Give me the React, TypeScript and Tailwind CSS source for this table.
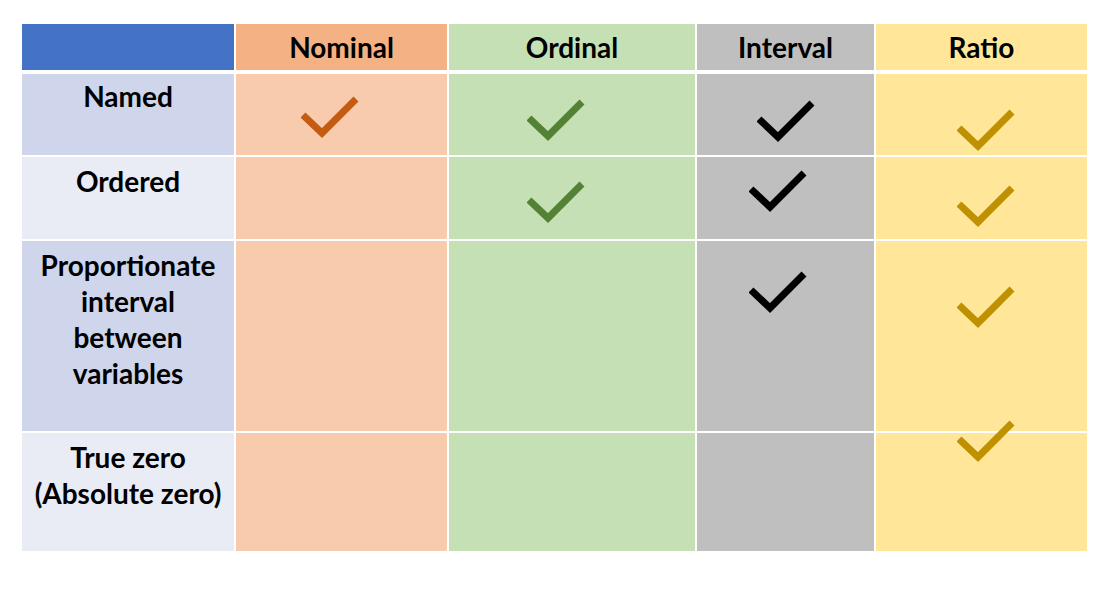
import React, { FC } from "react";

type Check = { x: number; y: number; color: string };

// positions relative to the table's top-left corner
const checks: Check[] = [
    { x: 279, y: 72, color: "#C55A11" },
    { x: 505, y: 75, color: "#538135" },
    { x: 735, y: 76, color: "#000000" },
    { x: 935, y: 85, color: "#BF9000" },
    { x: 505, y: 157, color: "#538135" },
    { x: 727, y: 146, color: "#000000" },
    { x: 935, y: 161, color: "#BF9000" },
    { x: 727, y: 247, color: "#000000" },
    { x: 935, y: 262, color: "#BF9000" },
    { x: 935, y: 396, color: "#BF9000" },
];

const CheckMark: FC<Check> = ({ x, y, color }) => (
    <svg
        className="absolute"
        style={{ left: x, top: y }}
        width="58"
        height="42"
        viewBox="0 0 58 42"
    >
        <polyline
            points="2,19 21,37 55,3"
            fill="none"
            stroke={color}
            strokeWidth="7"
            strokeLinejoin="miter"
            strokeLinecap="butt"
        />
    </svg>
);

const headers = [
    { label: "", bg: "bg-[#4472C4]" },
    { label: "Nominal", bg: "bg-[#F4B183]" },
    { label: "Ordinal", bg: "bg-[#C5E0B4]" },
    { label: "Interval", bg: "bg-[#BFBFBF]" },
    { label: "Ratio", bg: "bg-[#FFE699]" },
];

const rows = [
    { label: ["Named"], bg: "bg-[#CFD5EA]", pt: "pt-[4px]" },
    { label: ["Ordered"], bg: "bg-[#E9EBF5]", pt: "pt-[6px]" },
    {
        label: ["Proportionate", "interval", "between", "variables"],
        bg: "bg-[#CFD5EA]",
        pt: "pt-[6px]",
    },
    { label: ["True zero", "(Absolute zero)"], bg: "bg-[#E9EBF5]", pt: "pt-[6px]" },
];

const cols = "grid grid-cols-[212px_211px_246px_177px_211px] gap-x-[2px]";

const App = () => {
    return (
        <div className="w-[1120px] h-[592px] bg-white pt-[24px] pl-[22px] font-['Lato',sans-serif] font-bold text-black text-[28px] leading-[36px]">
            <div className="relative w-[1065px]">
                <div className={`${cols} h-[46px]`}>
                    {headers.map((h, i) => (
                        <div
                            key={i}
                            className={`${h.bg} flex items-center justify-center`}
                        >
                            {h.label}
                        </div>
                    ))}
                </div>
                <div
                    className={`${cols} mt-[4px] grid-rows-[81px_82px_190px_118px] gap-y-[2px]`}
                >
                    {rows.map((r, i) => (
                        <React.Fragment key={i}>
                            <div className={`${r.bg} ${r.pt} text-center`}>
                                {r.label.map((l, j) => (
                                    <div key={j}>{l}</div>
                                ))}
                            </div>
                            <div className="bg-[#F8CBAD]" />
                            <div className="bg-[#C5E0B4]" />
                            <div className="bg-[#BFBFBF]" />
                            <div className="bg-[#FFE699]" />
                        </React.Fragment>
                    ))}
                </div>
                {checks.map((c, i) => (
                    <CheckMark key={i} {...c} />
                ))}
            </div>
        </div>
    );
};

export default App;
